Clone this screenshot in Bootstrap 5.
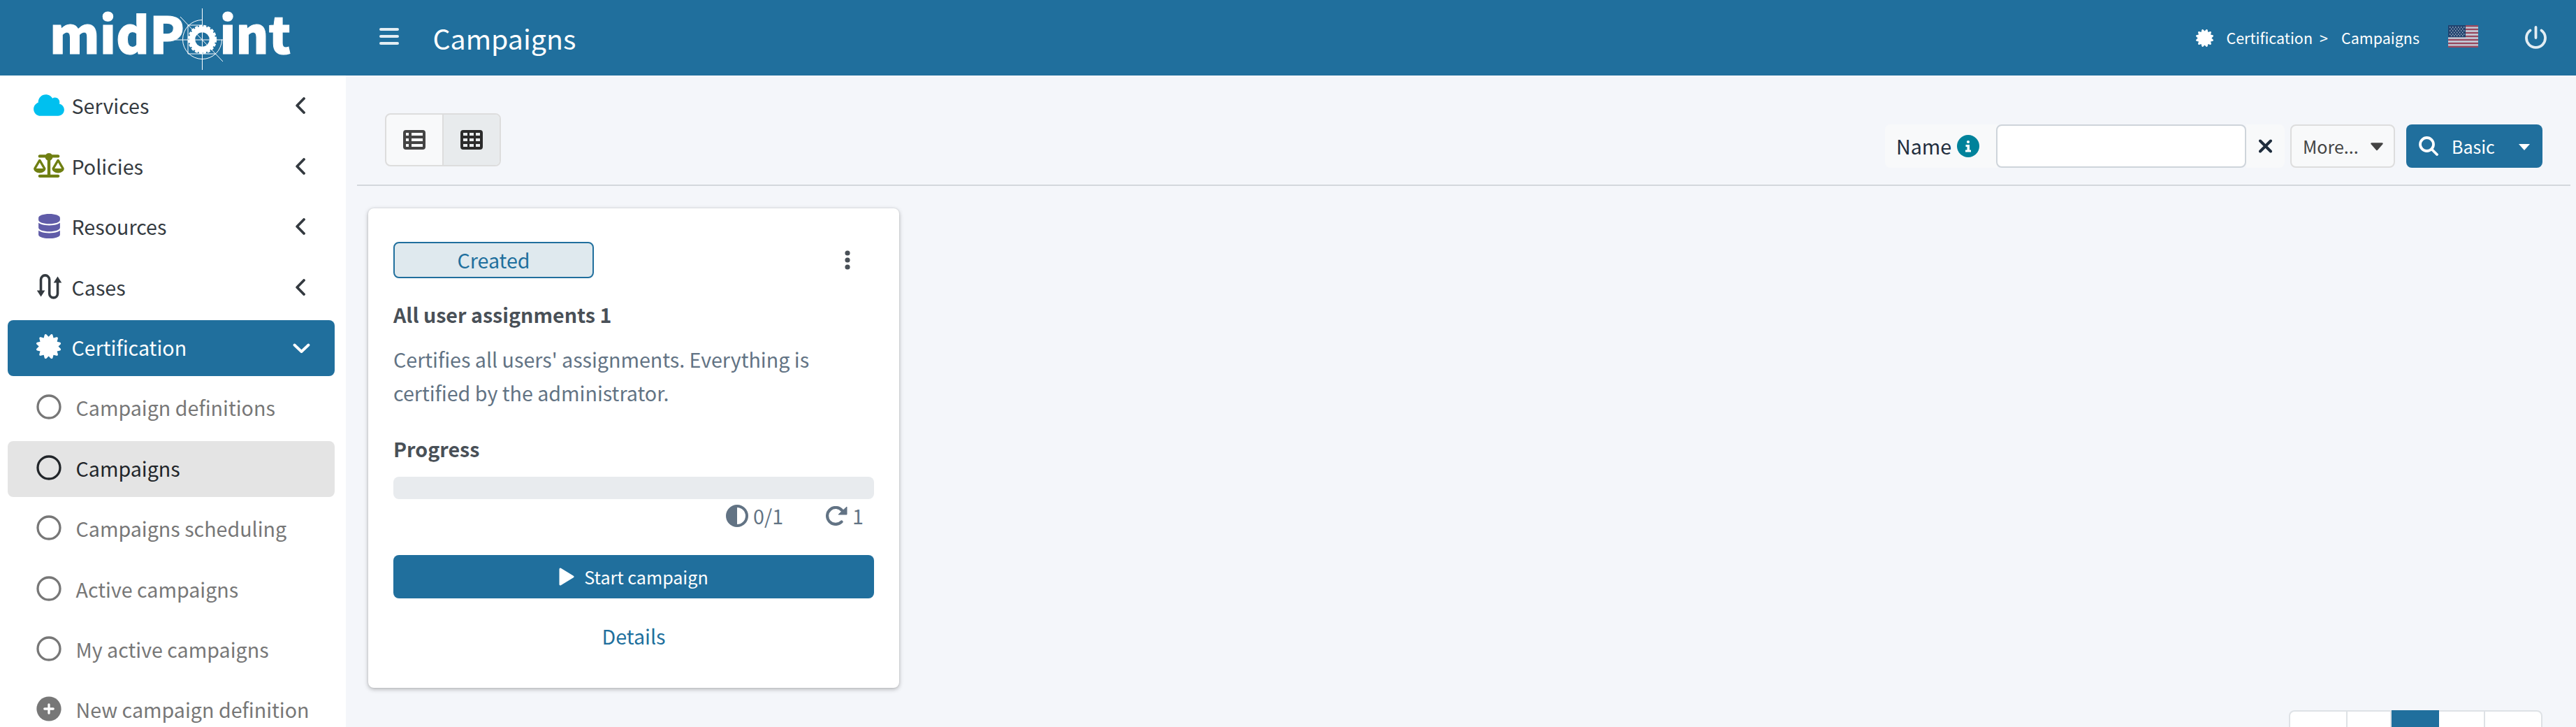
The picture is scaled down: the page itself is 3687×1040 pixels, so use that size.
<!DOCTYPE html>
<html lang="en">
<head>
<meta charset="utf-8">
<title>Campaigns</title>
<link href="https://cdn.jsdelivr.net/npm/bootstrap@5.3.0/dist/css/bootstrap.min.css" rel="stylesheet">
<style>
:root{--mp:#206f9d}
html,body{height:1040px;overflow:hidden}
body{background:#f4f6fa;font-family:"Noto Sans CJK SC","Noto Sans",sans-serif;font-size:28.65px;line-height:48px;color:#1f2d3d}
svg{display:block;flex:none;fill:currentColor}
.topbar{height:108px;background:var(--mp);color:#fff}
.brand-area{width:495px;padding-left:71px;height:108px}
.brand-area svg{overflow:visible}
.burger{margin-left:48px;width:28px;height:24px;opacity:.88;margin-top:-4px}
.page-title{font-size:39.3px;line-height:60px;margin:0 0 0 48.5px}
.crumbs{font-size:21.5px;line-height:36px}
.side{width:495px;height:932px;background:#fff;padding:4.4px 16px 0 11px;overflow:hidden}
.side-row{height:80px;margin-bottom:6.4px;padding:0 0 2px 32px;border-radius:8px;color:#343a40;white-space:nowrap}
.side-row .ico{width:54px;display:flex;justify-content:center;margin:-2px 5.500px 0 0}
.side-row.sub{color:#777}
.side-row.sub .ico{margin-right:11.500px}
.side-row .chev{margin-left:auto;margin-right:42px}
.side-row.open{background:var(--mp);color:#fff}
.side-row.open .chev{margin-right:35px;margin-top:3px}
.side-row.current{background:#e4e4e4;color:#212529}
.content-area{padding:0 8px 0 16px}
.toolbar-row{height:158px;border-bottom:2px solid #d3d7dc;padding:54px 40px 0 40px}
.view-switch{height:76px;border:2px solid #ddd;border-radius:8px;overflow:hidden;background:#f8f9fa;color:#444}
.view-switch div{width:80px}
.view-switch div+div{width:82px;border-left:2px solid #ddd;background:#e8ebed;color:#2b2b2b}
.search-row{margin-top:16px;height:62px}
.lbl{width:161px;background:#f8f9fa;border-radius:8px 0 0 8px;padding-left:16px;margin-right:-2px}
.field{width:358px;height:62px;border:2px solid #ced4da;border-radius:8px;background:#fff;position:relative}
.clr{width:55px;background:#f8f9fa;border-radius:0 8px 8px 0;padding-left:18px;margin-right:8px}
.more{width:150px;border:2px solid #ddd;border-radius:8px;background:#f8f9fa;color:#444;font-size:25px;padding-left:16px;margin-right:16px}
.basic{width:195px;border-radius:8px;background:var(--mp);color:#fff;font-size:25px;padding-left:18px}
.tile{width:760px;height:686px;margin:32px 0 0 16px;padding:48px 36px 0;border:0;border-radius:8px;background:#fff;box-shadow:0 0 2px rgba(0,0,0,.125),0 2px 6px rgba(0,0,0,.28)}
.state{width:287px;height:52px;border:2px solid var(--mp);border-radius:8px;background:#dfe9ee;color:var(--mp)}
.strong{font-weight:700;color:#495057}
.muted{color:#627384}
.bar{height:32px;border-radius:8px;background:#e8ebee}
.start{height:62px;border-radius:8px;background:var(--mp);color:#fff;font-size:25.07px;padding-bottom:1px}
.pager{margin:32px 40px 0 0;width:363px;height:76px;border:2px solid #dee2e6;border-radius:8px;background:#fff}
.pager div{border-right:2px solid #dee2e6}
.pager div:last-child{border:0}
.pager .on{background:var(--mp);border:0;margin-top:-2px}
</style>
</head>
<body>
<svg width="0" height="0" class="position-absolute">
<symbol id="cert" viewBox="0 0 512 512"><path d="M211 7.3C205 1 196-1.4 187.6 .8s-14.9 8.9-17.1 17.3L154.7 80.6l-62-17.5c-8.4-2.4-17.4 0-23.5 6.1s-8.5 15.1-6.1 23.5l17.5 62L18.1 170.6c-8.4 2.1-15 8.7-17.3 17.1S1 205 7.3 211l46.2 45L7.3 301C1 307-1.4 316 .8 324.4s8.9 14.9 17.3 17.1l62.5 15.8-17.5 62c-2.4 8.4 0 17.4 6.1 23.5s15.1 8.5 23.5 6.1l62-17.5 15.8 62.5c2.1 8.4 8.7 15 17.1 17.3s17.3-.2 23.4-6.4l45-46.2 45 46.2c6.1 6.2 15 8.7 23.4 6.4s14.9-8.9 17.1-17.3l15.8-62.5 62 17.5c8.4 2.4 17.4 0 23.5-6.1s8.5-15.1 6.1-23.5l-17.5-62 62.5-15.8c8.4-2.1 15-8.7 17.3-17.1s-.2-17.4-6.4-23.4l-46.2-45 46.2-45c6.2-6.1 8.7-15 6.4-23.4s-8.9-14.9-17.3-17.1l-62.5-15.8 17.5-62c2.4-8.4 0-17.4-6.1-23.5s-15.1-8.5-23.5-6.1l-62 17.5L341.4 18.1c-2.1-8.4-8.7-15-17.1-17.3S307 1 301 7.3L256 53.5 211 7.3z"/></symbol>
<symbol id="left" viewBox="0 0 14 24"><path d="M12 2L2.2 12 12 22" fill="none" stroke="currentColor" stroke-width="3.8" stroke-linecap="round" stroke-linejoin="round"/></symbol>
<symbol id="ring" viewBox="0 0 36 36"><circle cx="18" cy="18" r="16" fill="none" stroke="currentColor" stroke-width="3.3"/></symbol>
</svg>
<header class="topbar d-flex align-items-center">
  <div class="brand-area">
    <svg width="350" height="108" viewBox="0 0 350 108" fill="#fff">
      <g font-family="'Noto Sans CJK SC',sans-serif" font-weight="900" font-size="72" stroke="#fff" stroke-width="1">
        <text x="0" y="77" textLength="193" lengthAdjust="spacingAndGlyphs">midP</text>
        <text x="243.500" y="77" textLength="102" lengthAdjust="spacingAndGlyphs">int</text>
      </g>
      <g fill="none" stroke="#fff">
        <circle cx="218.500" cy="56.500" r="14.500" stroke-width="8.500"/>
        <circle cx="218.500" cy="56.500" r="19.200" stroke-width="3" stroke-dasharray="4.200 1.900"/>
        <path d="M218.500 28.500a28 28 0 1 0 28 28M218.500 12v88M180 57h68M187 24l61 64M218 36h-20v41h40" stroke-width="1"/>
      </g>
    </svg>
  </div>
  <svg class="burger" viewBox="0 0 28 24"><path d="M2 2h24M2 12h24M2 22h24" stroke="#fff" stroke-width="4" stroke-linecap="round"/></svg>
  <div class="page-title">Campaigns</div>
  <div class="crumbs d-flex align-items-center ms-auto">
    <svg width="25" height="25"><use href="#cert"/></svg>
    <span style="margin-left:18px">Certification</span><span style="margin-left:10px">&gt;</span><span style="margin-left:19px">Campaigns</span>
  </div>
  <svg width="43" height="32" viewBox="0 0 43 32" style="margin:-5px 67px 0 41px"><path fill="#c4d3df" d="M0 0h43v32H0z"/><path d="M0 1.200h43M0 6.100h43M0 11h43M0 16h43M0 21h43M0 26h43M0 30.800h43" stroke="#98495f" stroke-width="2.460"/><path fill="#21436f" d="M0 0h25v17.200H0z"/><path d="M2 3h22M2 8h22M2 13h22" stroke="#a9b8ca" stroke-width="1.400" stroke-dasharray="1.400 2.600"/><path d="M4 5.500h19M4 10.500h19M4 15h19" stroke="#a9b8ca" stroke-width="1.400" stroke-dasharray="1.400 2.600"/></svg>
  <svg width="31" height="33" viewBox="0 0 31 33" style="margin:-1px 42px 0 0" opacity=".88"><path d="M15.500 2v15M7.500 6.500a13.500 13.500 0 1 0 16 0" fill="none" stroke="#fff" stroke-width="3.800" stroke-linecap="round"/></svg>
</header>
<div class="d-flex">
<nav class="side flex-shrink-0">
  <div class="side-row d-flex align-items-center"><span class="ico" style="color:#00c0ef"><svg width="44" height="35" viewBox="0 0 640 512"><path d="M0 336c0 79.500 64.500 144 144 144H512c70.700 0 128-57.300 128-128c0-61.900-44-113.600-102.400-125.400c4.100-10.700 6.400-22.400 6.400-34.600c0-53-43-96-96-96c-19.700 0-38.100 6-53.300 16.200C367 64.200 315.300 32 256 32C167.600 32 96 103.600 96 192c0 2.700 .1 5.400 .2 8.100C40.200 219.800 0 273.200 0 336z"/></svg></span>Services<svg class="chev" width="14" height="24"><use href="#left"/></svg></div>
  <div class="side-row d-flex align-items-center"><span class="ico" style="color:#6f7f12"><svg width="44" height="35" viewBox="0 0 640 512"><path d="M384 32H512c17.700 0 32 14.300 32 32s-14.300 32-32 32H398.400c-5.200 25.800-22.900 47.100-46.400 57.300V448H512c17.700 0 32 14.300 32 32s-14.300 32-32 32H320 128c-17.700 0-32-14.300-32-32s14.300-32 32-32H288V153.300c-23.500-10.300-41.200-31.600-46.400-57.300H128c-17.700 0-32-14.300-32-32s14.300-32 32-32H256c14.600-19.400 37.800-32 64-32s49.400 12.600 64 32zm55.600 288H584.400L512 195.800 439.600 320zM512 416c-62.900 0-115.200-34-126-78.900c-2.600-11 1-22.300 6.700-32.100l95.200-163.200c5-8.600 14.200-13.800 24.100-13.800s19.100 5.300 24.100 13.800l95.200 163.200c5.700 9.800 9.300 21.100 6.700 32.100C627.200 382 574.900 416 512 416zM126.800 195.800L54.400 320H199.300L126.800 195.800zM.9 337.100c-2.600-11 1-22.300 6.700-32.100l95.200-163.200c5-8.600 14.200-13.800 24.100-13.800s19.100 5.300 24.100 13.800l95.200 163.200c5.700 9.800 9.300 21.100 6.700 32.100C242 382 189.700 416 126.800 416S11.700 382 .9 337.100z"/></svg></span>Policies<svg class="chev" width="14" height="24"><use href="#left"/></svg></div>
  <div class="side-row d-flex align-items-center"><span class="ico" style="color:#605ca8"><svg width="31" height="35.200" viewBox="0 0 448 512"><path d="M448 80v48c0 44.200-100.300 80-224 80S0 172.200 0 128V80C0 35.800 100.300 0 224 0S448 35.800 448 80zM393.200 214.700c20.800-7.400 39.900-16.900 54.800-28.600V288c0 44.200-100.300 80-224 80S0 332.200 0 288V186.100c14.900 11.800 34 21.200 54.800 28.600C99.700 230.700 159.500 240 224 240s124.300-9.300 169.200-25.300zM0 346.100c14.900 11.800 34 21.200 54.800 28.600C99.700 390.700 159.500 400 224 400s124.300-9.300 169.200-25.300c20.800-7.400 39.900-16.900 54.800-28.600V432c0 44.200-100.300 80-224 80S0 476.200 0 432V346.100z"/></svg></span>Resources<svg class="chev" width="14" height="24"><use href="#left"/></svg></div>
  <div class="side-row d-flex align-items-center"><span class="ico"><svg width="38" height="36" viewBox="0 0 38 36"><path d="M7.500 24V8a6.100 6.100 0 0 1 12.200 0v20a5.900 5.900 0 0 0 11.800 0V12" fill="none" stroke="currentColor" stroke-width="3.600"/><path d="M1.800 23.500h11.600L7.600 32.500zM25.700 12.500h11.600L31.500 3.500z"/></svg></span>Cases<svg class="chev" width="14" height="24"><use href="#left"/></svg></div>
  <div class="side-row open d-flex align-items-center"><span class="ico"><svg width="35.200" height="35.200"><use href="#cert"/></svg></span>Certification<svg class="chev" width="25" height="15" viewBox="0 0 25 15"><path d="M2.500 2.500l10 9.500 10-9.500" fill="none" stroke="currentColor" stroke-width="3.800" stroke-linecap="round" stroke-linejoin="round"/></svg></div>
  <div class="side-row sub d-flex align-items-center"><span class="ico"><svg width="36" height="36"><use href="#ring"/></svg></span>Campaign definitions</div>
  <div class="side-row sub current d-flex align-items-center"><span class="ico"><svg width="36" height="36"><use href="#ring"/></svg></span>Campaigns</div>
  <div class="side-row sub d-flex align-items-center"><span class="ico"><svg width="36" height="36"><use href="#ring"/></svg></span>Campaigns scheduling</div>
  <div class="side-row sub d-flex align-items-center"><span class="ico"><svg width="36" height="36"><use href="#ring"/></svg></span>Active campaigns</div>
  <div class="side-row sub d-flex align-items-center"><span class="ico"><svg width="36" height="36"><use href="#ring"/></svg></span>My active campaigns</div>
  <div class="side-row sub d-flex align-items-center"><span class="ico"><svg width="36" height="36" viewBox="0 0 36 36"><circle cx="18" cy="18" r="17.600"/><path d="M18 11.800v12.400M11.800 18h12.400" stroke="#fff" stroke-width="3.300" stroke-linecap="round"/></svg></span>New campaign definition</div>
</nav>
<main class="content-area flex-grow-1">
  <div class="toolbar-row d-flex justify-content-between align-items-start">
    <div class="view-switch d-flex">
      <div class="d-flex align-items-center justify-content-center"><svg width="32" height="28" viewBox="0 0 32 28"><path fill-rule="evenodd" d="M4 0h24a4 4 0 0 1 4 4v20a4 4 0 0 1-4 4H4a4 4 0 0 1-4-4V4a4 4 0 0 1 4-4zM4 4v4h4V4zM12 4v4h16V4zM4 12v4h4v-4zM12 12v4h16v-4zM4 20v4h4v-4zM12 20v4h16v-4z"/></svg></div>
      <div class="d-flex align-items-center justify-content-center"><svg width="32" height="28" viewBox="0 0 32 28"><path fill-rule="evenodd" d="M4 0h24a4 4 0 0 1 4 4v20a4 4 0 0 1-4 4H4a4 4 0 0 1-4-4V4a4 4 0 0 1 4-4zM4 4v4h6V4zM13 4v4h6V4zM22 4v4h6V4zM4 12v4h6v-4zM13 12v4h6v-4zM22 12v4h6v-4zM4 20v4h6v-4zM13 20v4h6v-4zM22 20v4h6v-4z"/></svg></div>
    </div>
    <div class="search-row d-flex align-items-stretch">
      <div class="lbl d-flex align-items-center">Name<svg width="32" height="32" viewBox="0 0 32 32" style="margin-left:8px" class="info"><circle cx="16" cy="16" r="16" fill="#00829b"/><g fill="#fff"><circle cx="16" cy="10" r="2.100"/><path d="M12.500 14h5.500v7.500h2v3h-8v-3h2.500v-4.500h-2z"/></g></svg></div>
      <div class="field"></div>
      <div class="clr d-flex align-items-center"><svg width="19" height="20" viewBox="0 0 19 20"><path d="M2 2.500l15 15M17 2.500l-15 15" stroke="currentColor" stroke-width="4" stroke-linecap="round"/></svg></div>
      <div class="more d-flex align-items-center">More...<svg width="18" height="13" viewBox="0 0 18 13" style="margin-left:17px"><path d="M1.500 2.500h15L9 11z" stroke="currentColor" stroke-width="2.400" stroke-linejoin="round"/></svg></div>
      <div class="basic d-flex align-items-center"><svg width="28" height="28" viewBox="0 0 28 28"><g fill="none" stroke="currentColor" stroke-width="3.800"><circle cx="11.500" cy="11.500" r="9.500"/><path d="M18.500 18.500l7.500 7.500" stroke-linecap="round"/></g></svg><span style="margin-left:19px">Basic</span><svg width="16" height="9" viewBox="0 0 16 9" class="ms-auto" style="margin-right:18px;margin-top:3px"><path d="M0 0h16L8 9z"/></svg></div>
    </div>
  </div>
  <section class="tile card">
    <div class="d-flex justify-content-between align-items-center"><div class="state d-flex justify-content-center align-items-center">Created</div><svg width="8" height="28" viewBox="0 0 8 28" style="margin-right:34px;color:#495057"><circle cx="4" cy="4" r="3.600"/><circle cx="4" cy="14" r="3.600"/><circle cx="4" cy="24" r="3.600"/></svg></div>
    <div class="strong" style="margin-top:28px">All user assignments 1</div>
    <div class="muted" style="margin-top:16px">Certifies all users' assignments. Everything is<br>certified by the administrator.</div>
    <div class="strong" style="margin-top:32px">Progress</div>
    <div class="bar" style="margin-top:16px"></div>
    <div class="muted d-flex justify-content-end align-items-center" style="height:48px;padding-right:15px"><svg width="32" height="32" viewBox="0 0 32 32"><path fill-rule="evenodd" d="M16 0a16 16 0 1 1 0 32a16 16 0 0 1 0-32zM16 4v24a12 12 0 0 0 0-24z"/></svg><span style="margin-left:7px">0/1</span><svg width="31" height="28" viewBox="0 0 31 28" style="margin:0 7px 0 61px"><path d="M22.500 22.500a12 12 0 1 1 1-16" fill="none" stroke="currentColor" stroke-width="4.200" stroke-linecap="round"/><path d="M30 1v11H18z" stroke="currentColor" stroke-linejoin="round"/></svg>1</div>
    <div class="start d-flex justify-content-center align-items-center" style="margin-top:32px"><svg width="22" height="26" viewBox="0 0 22 26" style="margin-right:14px"><path d="M2 2l18 11L2 24z" stroke="currentColor" stroke-width="3" stroke-linejoin="round"/></svg>Start campaign</div>
    <div class="text-center" style="color:var(--mp);margin-top:30px">Details</div>
  </section>
  <div class="pager d-flex ms-auto"><div style="width:82px"></div><div style="width:63px"></div><div class="on" style="width:68px"></div><div style="width:66px"></div><div class="flex-fill"></div></div>
</main>
</div>
<script src="https://cdn.jsdelivr.net/npm/bootstrap@5.3.0/dist/js/bootstrap.bundle.min.js"></script>
</body>
</html>
